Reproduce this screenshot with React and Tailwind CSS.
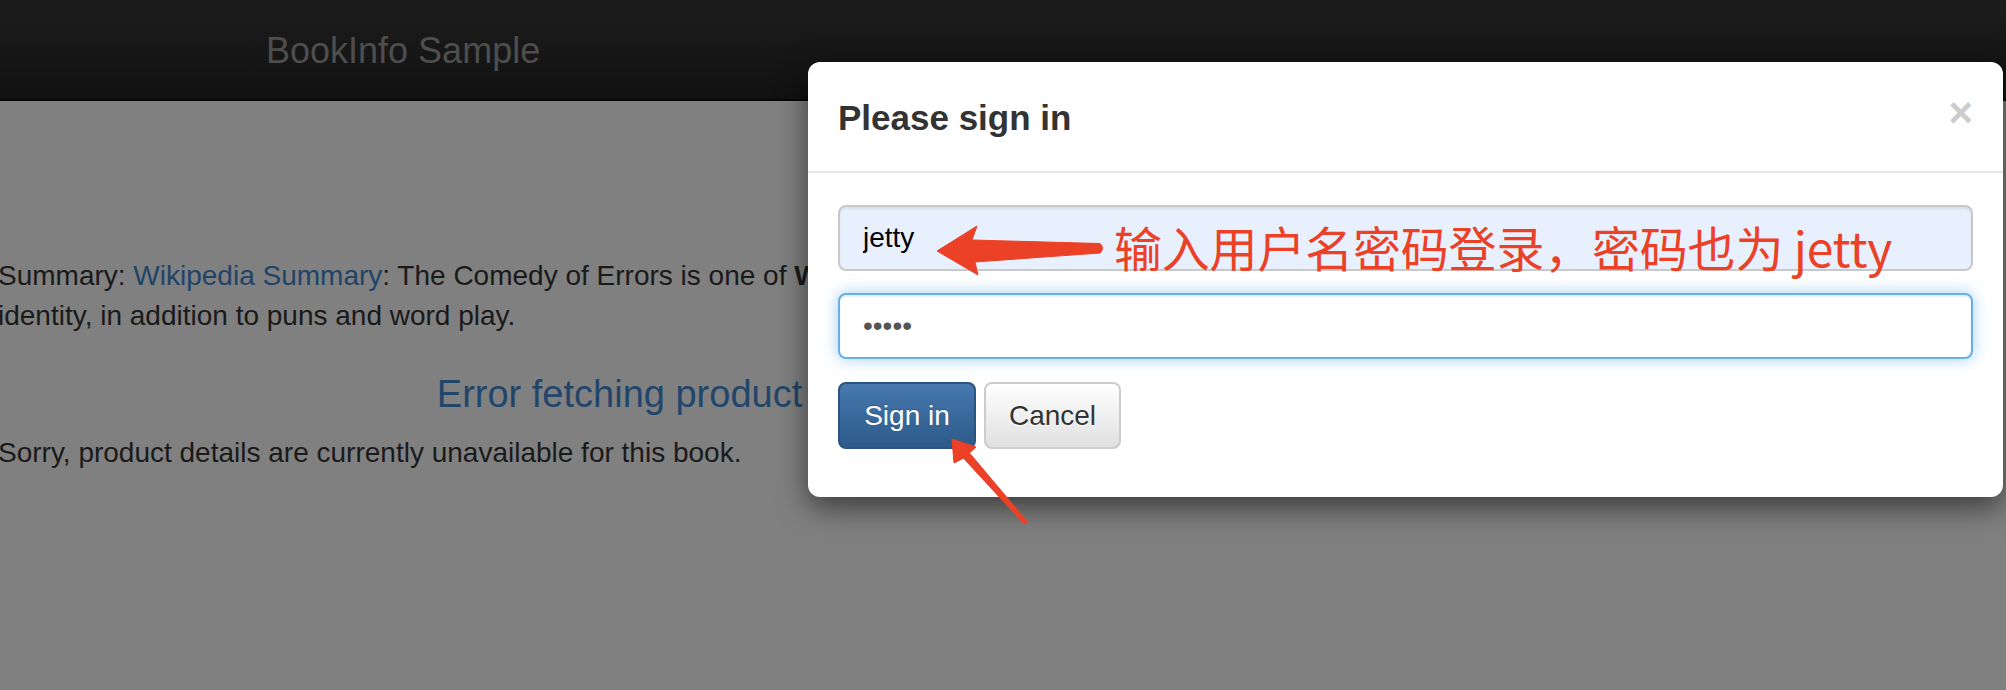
// App.jsx — BookInfo sample page with the sign-in modal open and a red annotation on top

const SANS = "font-['Liberation_Sans',Arial,sans-serif]"

function Navbar() {
  return (
    <header className="h-[101px] bg-linear-to-b from-[#1d1d1d] to-[#111111] border-b-2 border-[#050505]">
      <div className="pl-[266px] text-[36px] leading-[102px] text-[#4e4e4e]">BookInfo Sample</div>
    </header>
  )
}

function PageBody() {
  return (
    <main className="pt-[155px] ml-[-2px] w-[1990px] overflow-hidden text-[28px] leading-[40px] text-[#1a1a1a]">
      <p className="whitespace-nowrap">
        Summary: <a className="text-[#1f4468]">Wikipedia Summary</a>: The Comedy of Errors is one of{' '}
        <b>William Shakespeare's</b> early plays. It is his shortest and one of his most farcical comedies
      </p>
      <p className="whitespace-nowrap">identity, in addition to puns and word play.</p>
      <h4 className="w-[1374px] mt-[38px] text-center text-[38px] leading-[40px] text-[#22466b]">
        Error fetching product details!
      </h4>
      <p className="mt-[19px] whitespace-nowrap">Sorry, product details are currently unavailable for this book.</p>
    </main>
  )
}

function SignInModal() {
  return (
    <div className="absolute left-[808px] top-[62px] w-[1195px] bg-white rounded-[12px] shadow-[0_10px_30px_rgba(0,0,0,0.55)]">
      {/* header */}
      <div className="h-[111px] px-[30px] flex items-center justify-between border-b-2 border-[#e5e5e5]">
        <h4 className="text-[35px] font-bold text-[#333333] leading-[51px] mt-[1px]">Please sign in</h4>
        <span className="text-[42px] font-bold leading-none text-[#cccccc] mt-[-8px] mr-[0px]">×</span>
      </div>

      {/* body */}
      <div className="pt-[32px] px-[30px] pb-[48px]">
        <input
          readOnly
          defaultValue="jetty"
          className="block w-full h-[66px] pl-[23px] rounded-[8px] border-2 border-[#c9c9c9] bg-[#e8f0fe] text-[28px] text-black outline-none shadow-[inset_0_2px_2px_rgba(0,0,0,0.08)]"
        />
        <input
          readOnly
          type="password"
          defaultValue="jetty"
          className="block w-full h-[66px] mt-[22px] pl-[23px] rounded-[8px] border-2 border-[#66afe9] bg-white text-[28px] text-[#555555] outline-none shadow-[inset_0_2px_2px_rgba(0,0,0,0.075),0_0_16px_rgba(102,175,233,0.6)]"
        />
        <div className="flex gap-[8px] mt-[23px]">
          <button className="w-[138px] h-[67px] rounded-[8px] border-2 border-[#2a5582] bg-linear-to-b from-[#4779af] to-[#2c5a8a] text-[28px] text-white [text-shadow:0_-1px_0_rgba(0,0,0,0.2)]">
            Sign in
          </button>
          <button className="w-[137px] h-[67px] rounded-[8px] border-2 border-[#cccccc] bg-linear-to-b from-white to-[#e0e0e0] text-[28px] text-[#333333] [text-shadow:0_1px_0_#fff]">
            Cancel
          </button>
        </div>
      </div>
    </div>
  )
}

// Red screenshot annotation: two arrows and a note
function Annotation() {
  return (
    <>
      <svg className="absolute left-0 top-0 pointer-events-none" width="2006" height="690" viewBox="0 0 2006 690">
        <path
          d="M937 251 L977 226 L972 240 L1100 243.5 Q1105 248 1100 253 L975 262 L978 275 Z"
          fill="#ea4127"
          stroke="#ea4127"
          strokeWidth="1"
          strokeLinejoin="round"
        />
        <path
          d="M952 439 L976 447 L969.5 453 L1026.5 520.7 Q1028 524 1023.5 523.3 L963.5 458.2 L954 463 Z"
          fill="#ea4127"
          stroke="#ea4127"
          strokeWidth="1"
          strokeLinejoin="round"
        />
      </svg>
      <div className="absolute left-[1114px] top-[222px] whitespace-nowrap text-[48px] leading-[48px] tracking-[-0.2px] text-[#ea4127] font-['Noto_Sans_CJK_SC',sans-serif]">
        输入用户名密码登录，密码也为 jetty
      </div>
    </>
  )
}

export default function App() {
  return (
    <div className={`relative w-[2006px] h-[690px] overflow-hidden bg-[#808080] ${SANS}`}>
      <Navbar />
      <PageBody />
      <SignInModal />
      <Annotation />
    </div>
  )
}
